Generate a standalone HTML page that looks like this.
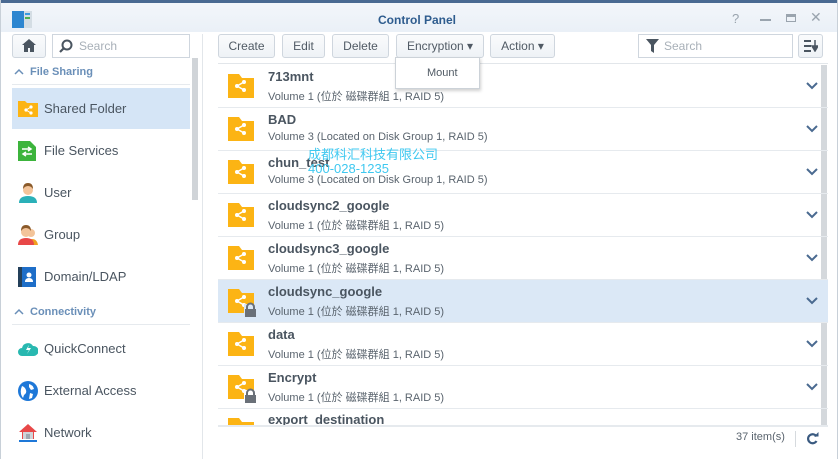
<!DOCTYPE html>
<html><head><meta charset="utf-8">
<style>
*{margin:0;padding:0;box-sizing:border-box}
body{width:838px;height:459px;overflow:hidden;font-family:"Liberation Sans","Noto Sans CJK TC",sans-serif;background:#fff;position:relative;color:#505a64}
.abs{position:absolute}
.title{left:0;top:0;width:838px;height:32px;background:linear-gradient(#f3f6fa,#eaf0f7);border-top:3px solid #4a6a92}
.win{left:0;top:0;width:838px;height:459px;border-left:1px solid #c8d0d8;border-right:1px solid #c8d0d8}
.btn{position:absolute;top:34px;height:24px;border:1px solid #cfd6de;border-radius:3px;background:linear-gradient(#fafbfc,#eef2f6);font-size:12px;color:#505a64;text-align:center;line-height:22px}
.inp{position:absolute;height:24px;border:1px solid #cfd6de;background:#fff;font-size:12px;color:#a8b0b8;line-height:22px}
.nav{position:absolute;left:12px;width:178px;height:41px;font-size:13px;color:#4a5560;line-height:41px;padding-left:32px}
.nav svg{position:absolute;left:6px;top:11px}
.sec{position:absolute;left:14px;font-size:11px;font-weight:bold;color:#6a8fb8}
.row{position:absolute;left:218px;width:610px;height:43px;border-bottom:1px solid #e6eaee}
.row .n{position:absolute;left:50px;top:4px;font-size:13px;font-weight:bold;color:#4a5560}
.row .d{position:absolute;left:50px;top:23px;font-size:11px;color:#5a646e}
.row .f{position:absolute;left:10px;top:9px}
.row .c{position:absolute;left:588px;top:17px}
</style></head><body>
<div class="abs title"></div>
<div class="abs win"></div>
<div class="abs" style="left:12px;top:11px;width:20px;height:17px;background:#2d86d0"></div>
<div class="abs" style="left:24px;top:11px;width:8px;height:17px;background:#d4dde4"></div>
<div class="abs" style="left:25px;top:13px;width:5px;height:2px;background:#3a9be0"></div>
<div class="abs" style="left:25px;top:17px;width:5px;height:2px;background:#4cb050"></div>
<div class="abs" style="left:378px;top:13px;font-size:12px;font-weight:bold;color:#2e5c8e">Control Panel</div>
<div class="abs" style="left:732px;top:11px;font-size:13px;color:#9aa4ae">?</div>
<div class="abs" style="left:760px;top:19px;width:11px;height:2px;background:#9aa4ae"></div>
<div class="abs" style="left:786px;top:14px;width:10px;height:8px;border:1px solid #9aa4ae;border-top-width:3px"></div>
<div class="abs" style="left:810px;top:9px;font-size:14px;color:#9aa4ae">✕</div>

<div class="btn" style="left:12px;width:34px"><svg width="14" height="13" viewBox="0 0 14 13" style="margin-top:4px"><path d="M7 0L0 6h2v7h4V9h2v4h4V6h2z" fill="#4a5560"/></svg></div>
<div class="inp" style="left:52px;top:34px;width:138px;padding-left:26px">Search</div>
<svg class="abs" style="left:59px;top:39px" width="14" height="14" viewBox="0 0 14 14"><circle cx="8" cy="6" r="4.5" fill="none" stroke="#4a5560" stroke-width="2"/><path d="M5 9L1 13" stroke="#4a5560" stroke-width="2.2"/></svg>
<div class="abs" style="left:202px;top:34px;width:1px;height:425px;background:#e2e6ea"></div>
<div class="abs" style="left:192px;top:58px;width:6px;height:142px;background:#d0d4d8"></div>
<div class="sec" style="top:66px"><svg width="10" height="7" style="margin-right:6px"><path d="M1 6l4-4 4 4" stroke="#6a8fb8" stroke-width="1.5" fill="none"/></svg>File Sharing</div>
<div class="abs" style="left:12px;top:84px;width:178px;height:1px;background:#e6eaee"></div>
<div class="nav" style="top:88px;background:#d5e5f6">Shared Folder<svg width="20" height="18"><path d="M0 2h7l2 2h11v14H0z" fill="#fcb414"/><circle cx="8" cy="11" r="1.6" fill="#fff"/><circle cx="13" cy="8" r="1.6" fill="#fff"/><circle cx="13" cy="14" r="1.6" fill="#fff"/><path d="M8 11L13 8M8 11L13 14" stroke="#fff"/></svg></div>
<div class="nav" style="top:130px">File Services<svg width="18" height="20"><path d="M0 0h12l6 6v14H0z" fill="#3cb43c"/><path d="M4 8h9M10 6l3 2-3 2M14 13H5M8 11l-3 2 3 2" stroke="#fff" fill="none" stroke-width="1.5"/></svg></div>
<div class="nav" style="top:172px">User<svg width="20" height="20"><circle cx="10" cy="7" r="5" fill="#f3c49a"/><path d="M5 6q0-6 5-6t5 6q-2-3-5-3t-5 3z" fill="#8a5a2a"/><path d="M1 20q0-7 9-7t9 7z" fill="#2ab0b8"/></svg></div>
<div class="nav" style="top:214px">Group<svg width="20" height="20"><circle cx="13" cy="8" r="4" fill="#f3c49a"/><path d="M9 20q0-6 5-6t6 6z" fill="#f0a020"/><circle cx="8" cy="7" r="5" fill="#f3c49a"/><path d="M3 6q0-6 5-6t5 6q-2-3-5-3t-5 3z" fill="#8a5a2a"/><path d="M0 20q0-7 8-7t8 7z" fill="#e84848"/></svg></div>
<div class="nav" style="top:256px">Domain/LDAP<svg width="18" height="20"><rect width="18" height="20" fill="#1e6ec8"/><rect width="4" height="20" fill="#24405a"/><circle cx="11" cy="8" r="2.5" fill="#fff"/><path d="M7 15q0-4 4-4t4 4z" fill="#fff"/></svg></div>
<div class="sec" style="top:306px"><svg width="10" height="7" style="margin-right:6px"><path d="M1 6l4-4 4 4" stroke="#6a8fb8" stroke-width="1.5" fill="none"/></svg>Connectivity</div>
<div class="abs" style="left:12px;top:324px;width:178px;height:1px;background:#e6eaee"></div>
<div class="nav" style="top:328px">QuickConnect<svg width="20" height="18"><path d="M4 17a4 4 0 010-8 6 6 0 0111-2 5 5 0 011 10z" fill="#28b8b0"/><path d="M11 6l-3 5h3l-2 4 4-6h-3z" fill="#fff"/></svg></div>
<div class="nav" style="top:370px">External Access<svg width="20" height="20"><circle cx="10" cy="10" r="10" fill="#1e78d8"/><path d="M4 5q3 1 4 4t-2 5l-1 3q-3-4-2-9zM11 3q4 1 5 5l-3 1-2-3zM12 12l3 1-1 4-3 1z" fill="#fff"/></svg></div>
<div class="nav" style="top:412px">Network<svg width="20" height="20"><path d="M10 1L1 9h3v7h12V9h3z" fill="#e84848"/><path d="M5 9h10v7H5z" fill="#d0d4d8"/><rect x="8" y="11" width="4" height="5" fill="#a0a8b0"/><path d="M1 18h18" stroke="#1e78d8" stroke-width="2"/></svg></div>

<div class="btn" style="left:218px;width:57px">Create</div>
<div class="btn" style="left:282px;width:43px">Edit</div>
<div class="btn" style="left:332px;width:57px">Delete</div>
<div class="btn" style="left:396px;width:88px">Encryption ▾</div>
<div class="btn" style="left:490px;width:65px">Action ▾</div>
<div class="inp" style="left:638px;top:34px;width:155px;padding-left:25px">Search</div>
<svg class="abs" style="left:646px;top:39px" width="13" height="14"><path d="M0 0h13L8 6v8L5 12V6z" fill="#4a5560"/></svg>
<div class="btn" style="left:798px;width:25px"><svg width="14" height="12" style="margin-top:5px"><path d="M0 1h7M0 6h7M0 11h7" stroke="#4a5560" stroke-width="2"/><path d="M11 0v8M8 6l3 5 3-5z" stroke="#4a5560" fill="#4a5560" stroke-width="1.5"/></svg></div>
<div class="abs" style="left:218px;top:63px;width:610px;height:1px;background:#e2e6ea"></div>
<div class="abs" style="left:821px;top:65px;width:6px;height:360px;background:#d4d8dc"></div>

<div class="row" style="top:65px"><svg class="f" width="26" height="24"><path d="M0 0h11l3 4h12v20H0z" fill="#fcb414"/><circle cx="9" cy="12" r="2" fill="#fff"/><circle cx="16" cy="8" r="2" fill="#fff"/><circle cx="16" cy="16" r="2" fill="#fff"/><path d="M9 12L16 8M9 12L16 16" stroke="#fff" stroke-width="1.5"/></svg><div class="n">713mnt</div><div class="d">Volume 1 (位於 磁碟群組 1, RAID 5)</div><svg class="c" width="12" height="8"><path d="M1 1l5 5 5-5" stroke="#4a6a90" stroke-width="2" fill="none"/></svg></div>
<div class="row" style="top:108px"><svg class="f" width="26" height="24"><path d="M0 0h11l3 4h12v20H0z" fill="#fcb414"/><circle cx="9" cy="12" r="2" fill="#fff"/><circle cx="16" cy="8" r="2" fill="#fff"/><circle cx="16" cy="16" r="2" fill="#fff"/><path d="M9 12L16 8M9 12L16 16" stroke="#fff" stroke-width="1.5"/></svg><div class="n">BAD</div><div class="d">Volume 3 (Located on Disk Group 1, RAID 5)</div><svg class="c" width="12" height="8"><path d="M1 1l5 5 5-5" stroke="#4a6a90" stroke-width="2" fill="none"/></svg></div>
<div class="row" style="top:151px"><svg class="f" width="26" height="24"><path d="M0 0h11l3 4h12v20H0z" fill="#fcb414"/><circle cx="9" cy="12" r="2" fill="#fff"/><circle cx="16" cy="8" r="2" fill="#fff"/><circle cx="16" cy="16" r="2" fill="#fff"/><path d="M9 12L16 8M9 12L16 16" stroke="#fff" stroke-width="1.5"/></svg><div class="n">chun_test</div><div class="d">Volume 3 (Located on Disk Group 1, RAID 5)</div><svg class="c" width="12" height="8"><path d="M1 1l5 5 5-5" stroke="#4a6a90" stroke-width="2" fill="none"/></svg></div>
<div class="row" style="top:194px"><svg class="f" width="26" height="24"><path d="M0 0h11l3 4h12v20H0z" fill="#fcb414"/><circle cx="9" cy="12" r="2" fill="#fff"/><circle cx="16" cy="8" r="2" fill="#fff"/><circle cx="16" cy="16" r="2" fill="#fff"/><path d="M9 12L16 8M9 12L16 16" stroke="#fff" stroke-width="1.5"/></svg><div class="n">cloudsync2_google</div><div class="d">Volume 1 (位於 磁碟群組 1, RAID 5)</div><svg class="c" width="12" height="8"><path d="M1 1l5 5 5-5" stroke="#4a6a90" stroke-width="2" fill="none"/></svg></div>
<div class="row" style="top:237px"><svg class="f" width="26" height="24"><path d="M0 0h11l3 4h12v20H0z" fill="#fcb414"/><circle cx="9" cy="12" r="2" fill="#fff"/><circle cx="16" cy="8" r="2" fill="#fff"/><circle cx="16" cy="16" r="2" fill="#fff"/><path d="M9 12L16 8M9 12L16 16" stroke="#fff" stroke-width="1.5"/></svg><div class="n">cloudsync3_google</div><div class="d">Volume 1 (位於 磁碟群組 1, RAID 5)</div><svg class="c" width="12" height="8"><path d="M1 1l5 5 5-5" stroke="#4a6a90" stroke-width="2" fill="none"/></svg></div>
<div class="row" style="top:280px;background:#dbe8f6"><svg class="f" width="30" height="28"><path d="M0 0h11l3 4h12v20H0z" fill="#fcb414"/><circle cx="9" cy="12" r="2" fill="#fff"/><circle cx="16" cy="8" r="2" fill="#fff"/><circle cx="16" cy="16" r="2" fill="#fff"/><path d="M9 12L16 8M9 12L16 16" stroke="#fff" stroke-width="1.5"/><rect x="16" y="15" width="13" height="13" fill="#dbe8f6"/><path d="M19 20v-2a3.5 3.5 0 017 0v2" stroke="#6a7078" stroke-width="2" fill="none"/><rect x="17" y="20" width="11" height="8" fill="#6a7078"/></svg><div class="n">cloudsync_google</div><div class="d">Volume 1 (位於 磁碟群組 1, RAID 5)</div><svg class="c" width="12" height="8"><path d="M1 1l5 5 5-5" stroke="#4a6a90" stroke-width="2" fill="none"/></svg></div>
<div class="row" style="top:323px"><svg class="f" width="26" height="24"><path d="M0 0h11l3 4h12v20H0z" fill="#fcb414"/><circle cx="9" cy="12" r="2" fill="#fff"/><circle cx="16" cy="8" r="2" fill="#fff"/><circle cx="16" cy="16" r="2" fill="#fff"/><path d="M9 12L16 8M9 12L16 16" stroke="#fff" stroke-width="1.5"/></svg><div class="n">data</div><div class="d">Volume 1 (位於 磁碟群組 1, RAID 5)</div><svg class="c" width="12" height="8"><path d="M1 1l5 5 5-5" stroke="#4a6a90" stroke-width="2" fill="none"/></svg></div>
<div class="row" style="top:366px"><svg class="f" width="30" height="28"><path d="M0 0h11l3 4h12v20H0z" fill="#fcb414"/><circle cx="9" cy="12" r="2" fill="#fff"/><circle cx="16" cy="8" r="2" fill="#fff"/><circle cx="16" cy="16" r="2" fill="#fff"/><path d="M9 12L16 8M9 12L16 16" stroke="#fff" stroke-width="1.5"/><rect x="16" y="15" width="13" height="13" fill="#fff"/><path d="M19 20v-2a3.5 3.5 0 017 0v2" stroke="#6a7078" stroke-width="2" fill="none"/><rect x="17" y="20" width="11" height="8" fill="#6a7078"/></svg><div class="n">Encrypt</div><div class="d">Volume 1 (位於 磁碟群組 1, RAID 5)</div><svg class="c" width="12" height="8"><path d="M1 1l5 5 5-5" stroke="#4a6a90" stroke-width="2" fill="none"/></svg></div>
<div class="row" style="top:409px;height:17px;overflow:hidden"><svg class="f" width="26" height="24"><path d="M0 0h11l3 4h12v20H0z" fill="#fcb414"/></svg><div class="n" style="top:3px">export_destination</div></div>
<div class="abs" style="left:218px;top:426px;width:610px;height:1px;background:#e6eaee"></div>
<div class="abs" style="left:736px;top:431px;font-size:11px;color:#5a646e">37 item(s)</div>
<div class="abs" style="left:795px;top:431px;width:1px;height:16px;background:#d6dade"></div>
<svg class="abs" style="left:806px;top:432px" width="13" height="13" viewBox="0 0 13 13"><path d="M10.5 4.5A4.5 4.5 0 1 0 10.5 9" stroke="#3a5a80" stroke-width="2.2" fill="none"/><path d="M8 4.5h4.5V0z" fill="#3a5a80"/></svg>

<div class="abs" style="left:395px;top:57px;width:85px;height:32px;background:#fff;border:1px solid #ccd2d8;box-shadow:1px 2px 3px rgba(0,0,0,.18);font-size:11px;color:#505a64;padding:9px 0 0 31px">Mount</div>

<div class="abs" style="left:308px;top:148px;font-size:13px;color:#3ec8f0;line-height:14px;font-family:'Liberation Sans','Noto Sans CJK SC',sans-serif">成都科汇科技有限公司<br>400-028-1235</div>
</body></html>
